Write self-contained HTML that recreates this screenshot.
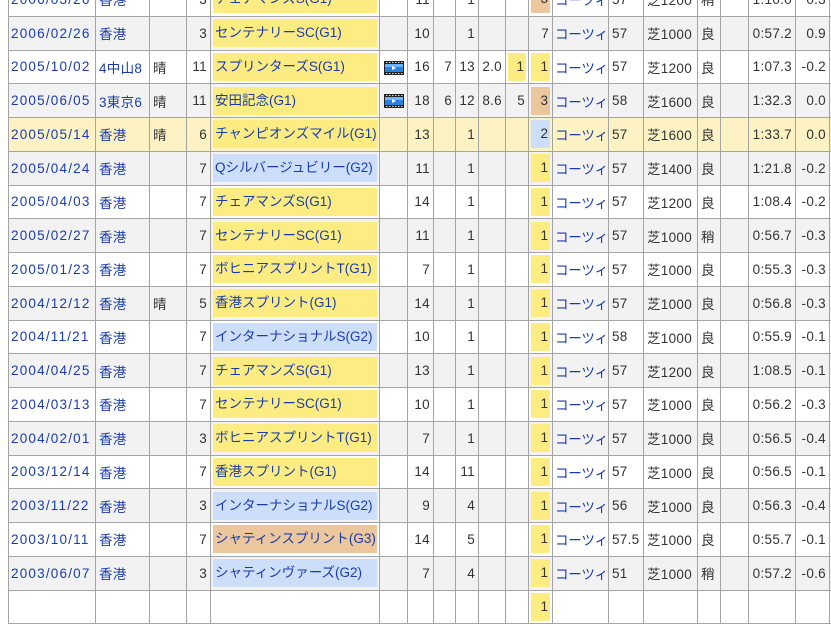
<!DOCTYPE html>
<html><head><meta charset="utf-8">
<style>
html,body{margin:0;padding:0;background:#fff;width:831px;height:598px;overflow:hidden}
table{position:absolute;left:8px;top:-18px;width:861px;border-collapse:collapse;table-layout:fixed;font-family:"Liberation Sans","Noto Sans CJK JP",sans-serif;font-size:13.5px;color:#333}
td{border:1px solid #a4a4a4;padding:0 3px;white-space:nowrap;overflow:hidden;height:32.75px;letter-spacing:0.3px}
td:first-child{letter-spacing:1.2px;padding-left:2px}
td.j{padding:0 0 0 2px;letter-spacing:-0.2px}
tr.g td{background:#f2f2f2}
tr.h td{background:#fcf2c4}
td.r{text-align:right}
a{color:#1a3caa;text-decoration:none}
td.b{padding:0 2px;letter-spacing:0}
td.b div{height:28px;line-height:28px;padding:0 2px}
.y{background:#fdec82}.bl{background:#cddefb}.o{background:#ecc79e}
td.k div{text-align:right}
</style></head><body>
<svg width="0" height="0" style="position:absolute"><defs>
<symbol id="v" viewBox="0 0 20 14"><rect width="20" height="14" fill="#222"/><rect x="1" y="3" width="18" height="8" fill="#2a7fe0"/><rect x="1" y="3" width="18" height="3" fill="#6ab3ff"/><path d="M8 5 L12 7 L8 9Z" fill="#fff"/><g fill="#ddd"><rect x="2" y="1" width="1.5" height="1"/><rect x="5" y="1" width="1.5" height="1"/><rect x="8" y="1" width="1.5" height="1"/><rect x="11" y="1" width="1.5" height="1"/><rect x="14" y="1" width="1.5" height="1"/><rect x="17" y="1" width="1.5" height="1"/><rect x="2" y="12" width="1.5" height="1"/><rect x="5" y="12" width="1.5" height="1"/><rect x="8" y="12" width="1.5" height="1"/><rect x="11" y="12" width="1.5" height="1"/><rect x="14" y="12" width="1.5" height="1"/><rect x="17" y="12" width="1.5" height="1"/></g></symbol></defs></svg>
<table>
<colgroup><col style="width:87px"><col style="width:54px"><col style="width:37px"><col style="width:24px"><col style="width:169px"><col style="width:28px"><col style="width:26px"><col style="width:22px"><col style="width:23px"><col style="width:27px"><col style="width:23px"><col style="width:24px"><col style="width:56px"><col style="width:35px"><col style="width:54px"><col style="width:23px"><col style="width:28px"><col style="width:47px"><col style="width:34px"><col style="width:40px"></colgroup>
<tr><td><a>2006/03/26</a></td><td><a>香港</a></td><td></td><td class="r">3</td><td class="b"><div class="y"><a>チェアマンズS(G1)</a></div></td><td></td><td class="r">11</td><td></td><td class="r">1</td><td></td><td></td><td class="b k"><div class="o">3</div></td><td class="j"><a>コーツィ</a></td><td>57</td><td>芝1200</td><td>稍</td><td></td><td class="r">1:10.0</td><td class="r">0.3</td><td></td></tr>
<tr class="g"><td><a>2006/02/26</a></td><td><a>香港</a></td><td></td><td class="r">3</td><td class="b"><div class="y"><a>センテナリーSC(G1)</a></div></td><td></td><td class="r">10</td><td></td><td class="r">1</td><td></td><td></td><td class="r">7</td><td class="j"><a>コーツィ</a></td><td>57</td><td>芝1000</td><td>良</td><td></td><td class="r">0:57.2</td><td class="r">0.9</td><td></td></tr>
<tr><td><a>2005/10/02</a></td><td><a>4中山8</a></td><td>晴</td><td class="r">11</td><td class="b"><div class="y"><a>スプリンターズS(G1)</a></div></td><td style="text-align:center"><svg width="20" height="14" style="vertical-align:middle"><use href="#v"/></svg></td><td class="r">16</td><td class="r">7</td><td class="r">13</td><td class="r">2.0</td><td class="b k"><div class="y">1</div></td><td class="b k"><div class="y">1</div></td><td class="j"><a>コーツィ</a></td><td>57</td><td>芝1200</td><td>良</td><td></td><td class="r">1:07.3</td><td class="r">-0.2</td><td></td></tr>
<tr class="g"><td><a>2005/06/05</a></td><td><a>3東京6</a></td><td>晴</td><td class="r">11</td><td class="b"><div class="y"><a>安田記念(G1)</a></div></td><td style="text-align:center"><svg width="20" height="14" style="vertical-align:middle"><use href="#v"/></svg></td><td class="r">18</td><td class="r">6</td><td class="r">12</td><td class="r">8.6</td><td class="r">5</td><td class="b k"><div class="o">3</div></td><td class="j"><a>コーツィ</a></td><td>58</td><td>芝1600</td><td>良</td><td></td><td class="r">1:32.3</td><td class="r">0.0</td><td></td></tr>
<tr class="h"><td><a>2005/05/14</a></td><td><a>香港</a></td><td>晴</td><td class="r">6</td><td class="b"><div class="y"><a>チャンピオンズマイル(G1)</a></div></td><td></td><td class="r">13</td><td></td><td class="r">1</td><td></td><td></td><td class="b k"><div class="bl">2</div></td><td class="j"><a>コーツィ</a></td><td>57</td><td>芝1600</td><td>良</td><td></td><td class="r">1:33.7</td><td class="r">0.0</td><td></td></tr>
<tr class="g"><td><a>2005/04/24</a></td><td><a>香港</a></td><td></td><td class="r">7</td><td class="b"><div class="bl"><a>Qシルバージュビリー(G2)</a></div></td><td></td><td class="r">11</td><td></td><td class="r">1</td><td></td><td></td><td class="b k"><div class="y">1</div></td><td class="j"><a>コーツィ</a></td><td>57</td><td>芝1400</td><td>良</td><td></td><td class="r">1:21.8</td><td class="r">-0.2</td><td></td></tr>
<tr><td><a>2005/04/03</a></td><td><a>香港</a></td><td></td><td class="r">7</td><td class="b"><div class="y"><a>チェアマンズS(G1)</a></div></td><td></td><td class="r">14</td><td></td><td class="r">1</td><td></td><td></td><td class="b k"><div class="y">1</div></td><td class="j"><a>コーツィ</a></td><td>57</td><td>芝1200</td><td>良</td><td></td><td class="r">1:08.4</td><td class="r">-0.2</td><td></td></tr>
<tr class="g"><td><a>2005/02/27</a></td><td><a>香港</a></td><td></td><td class="r">7</td><td class="b"><div class="y"><a>センテナリーSC(G1)</a></div></td><td></td><td class="r">11</td><td></td><td class="r">1</td><td></td><td></td><td class="b k"><div class="y">1</div></td><td class="j"><a>コーツィ</a></td><td>57</td><td>芝1000</td><td>稍</td><td></td><td class="r">0:56.7</td><td class="r">-0.3</td><td></td></tr>
<tr><td><a>2005/01/23</a></td><td><a>香港</a></td><td></td><td class="r">7</td><td class="b"><div class="y"><a>ボヒニアスプリントT(G1)</a></div></td><td></td><td class="r">7</td><td></td><td class="r">1</td><td></td><td></td><td class="b k"><div class="y">1</div></td><td class="j"><a>コーツィ</a></td><td>57</td><td>芝1000</td><td>良</td><td></td><td class="r">0:55.3</td><td class="r">-0.3</td><td></td></tr>
<tr class="g"><td><a>2004/12/12</a></td><td><a>香港</a></td><td>晴</td><td class="r">5</td><td class="b"><div class="y"><a>香港スプリント(G1)</a></div></td><td></td><td class="r">14</td><td></td><td class="r">1</td><td></td><td></td><td class="b k"><div class="y">1</div></td><td class="j"><a>コーツィ</a></td><td>57</td><td>芝1000</td><td>良</td><td></td><td class="r">0:56.8</td><td class="r">-0.3</td><td></td></tr>
<tr><td><a>2004/11/21</a></td><td><a>香港</a></td><td></td><td class="r">7</td><td class="b"><div class="bl"><a>インターナショナルS(G2)</a></div></td><td></td><td class="r">10</td><td></td><td class="r">1</td><td></td><td></td><td class="b k"><div class="y">1</div></td><td class="j"><a>コーツィ</a></td><td>58</td><td>芝1000</td><td>良</td><td></td><td class="r">0:55.9</td><td class="r">-0.1</td><td></td></tr>
<tr class="g"><td><a>2004/04/25</a></td><td><a>香港</a></td><td></td><td class="r">7</td><td class="b"><div class="y"><a>チェアマンズS(G1)</a></div></td><td></td><td class="r">13</td><td></td><td class="r">1</td><td></td><td></td><td class="b k"><div class="y">1</div></td><td class="j"><a>コーツィ</a></td><td>57</td><td>芝1200</td><td>良</td><td></td><td class="r">1:08.5</td><td class="r">-0.1</td><td></td></tr>
<tr><td><a>2004/03/13</a></td><td><a>香港</a></td><td></td><td class="r">7</td><td class="b"><div class="y"><a>センテナリーSC(G1)</a></div></td><td></td><td class="r">10</td><td></td><td class="r">1</td><td></td><td></td><td class="b k"><div class="y">1</div></td><td class="j"><a>コーツィ</a></td><td>57</td><td>芝1000</td><td>良</td><td></td><td class="r">0:56.2</td><td class="r">-0.3</td><td></td></tr>
<tr class="g"><td><a>2004/02/01</a></td><td><a>香港</a></td><td></td><td class="r">3</td><td class="b"><div class="y"><a>ボヒニアスプリントT(G1)</a></div></td><td></td><td class="r">7</td><td></td><td class="r">1</td><td></td><td></td><td class="b k"><div class="y">1</div></td><td class="j"><a>コーツィ</a></td><td>57</td><td>芝1000</td><td>良</td><td></td><td class="r">0:56.5</td><td class="r">-0.4</td><td></td></tr>
<tr><td><a>2003/12/14</a></td><td><a>香港</a></td><td></td><td class="r">7</td><td class="b"><div class="y"><a>香港スプリント(G1)</a></div></td><td></td><td class="r">14</td><td></td><td class="r">11</td><td></td><td></td><td class="b k"><div class="y">1</div></td><td class="j"><a>コーツィ</a></td><td>57</td><td>芝1000</td><td>良</td><td></td><td class="r">0:56.5</td><td class="r">-0.1</td><td></td></tr>
<tr class="g"><td><a>2003/11/22</a></td><td><a>香港</a></td><td></td><td class="r">3</td><td class="b"><div class="bl"><a>インターナショナルS(G2)</a></div></td><td></td><td class="r">9</td><td></td><td class="r">4</td><td></td><td></td><td class="b k"><div class="y">1</div></td><td class="j"><a>コーツィ</a></td><td>56</td><td>芝1000</td><td>良</td><td></td><td class="r">0:56.3</td><td class="r">-0.4</td><td></td></tr>
<tr><td><a>2003/10/11</a></td><td><a>香港</a></td><td></td><td class="r">7</td><td class="b"><div class="o"><a>シャティンスプリント(G3)</a></div></td><td></td><td class="r">14</td><td></td><td class="r">5</td><td></td><td></td><td class="b k"><div class="y">1</div></td><td class="j"><a>コーツィ</a></td><td>57.5</td><td>芝1000</td><td>良</td><td></td><td class="r">0:55.7</td><td class="r">-0.1</td><td></td></tr>
<tr class="g"><td><a>2003/06/07</a></td><td><a>香港</a></td><td></td><td class="r">3</td><td class="b"><div class="bl"><a>シャティンヴァーズ(G2)</a></div></td><td></td><td class="r">7</td><td></td><td class="r">4</td><td></td><td></td><td class="b k"><div class="y">1</div></td><td class="j"><a>コーツィ</a></td><td>51</td><td>芝1000</td><td>稍</td><td></td><td class="r">0:57.2</td><td class="r">-0.6</td><td></td></tr>
<tr><td></td><td></td><td></td><td></td><td class="b"><div></div></td><td></td><td></td><td></td><td></td><td></td><td></td><td class="b k"><div class="y">1</div></td><td></td><td></td><td></td><td></td><td></td><td></td><td></td><td></td></tr>
</table>
</body></html>
